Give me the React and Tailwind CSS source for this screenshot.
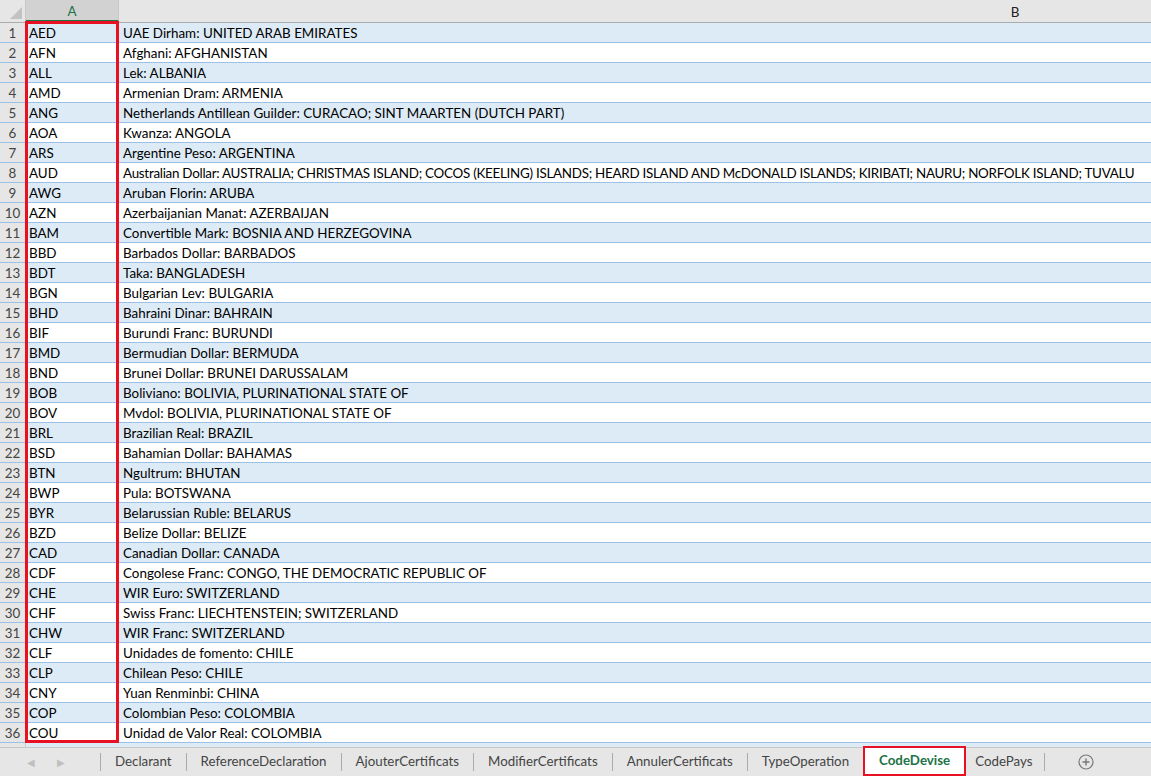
import React from 'react';

const rows = [
  ['AED', 'UAE Dirham: UNITED ARAB EMIRATES'],
  ['AFN', 'Afghani: AFGHANISTAN'],
  ['ALL', 'Lek: ALBANIA'],
  ['AMD', 'Armenian Dram: ARMENIA'],
  ['ANG', 'Netherlands Antillean Guilder: CURACAO; SINT MAARTEN (DUTCH PART)'],
  ['AOA', 'Kwanza: ANGOLA'],
  ['ARS', 'Argentine Peso: ARGENTINA'],
  ['AUD', 'Australian Dollar: AUSTRALIA; CHRISTMAS ISLAND; COCOS (KEELING) ISLANDS; HEARD ISLAND AND McDONALD ISLANDS; KIRIBATI; NAURU; NORFOLK ISLAND; TUVALU'],
  ['AWG', 'Aruban Florin: ARUBA'],
  ['AZN', 'Azerbaijanian Manat: AZERBAIJAN'],
  ['BAM', 'Convertible Mark: BOSNIA AND HERZEGOVINA'],
  ['BBD', 'Barbados Dollar: BARBADOS'],
  ['BDT', 'Taka: BANGLADESH'],
  ['BGN', 'Bulgarian Lev: BULGARIA'],
  ['BHD', 'Bahraini Dinar: BAHRAIN'],
  ['BIF', 'Burundi Franc: BURUNDI'],
  ['BMD', 'Bermudian Dollar: BERMUDA'],
  ['BND', 'Brunei Dollar: BRUNEI DARUSSALAM'],
  ['BOB', 'Boliviano: BOLIVIA, PLURINATIONAL STATE OF'],
  ['BOV', 'Mvdol: BOLIVIA, PLURINATIONAL STATE OF'],
  ['BRL', 'Brazilian Real: BRAZIL'],
  ['BSD', 'Bahamian Dollar: BAHAMAS'],
  ['BTN', 'Ngultrum: BHUTAN'],
  ['BWP', 'Pula: BOTSWANA'],
  ['BYR', 'Belarussian Ruble: BELARUS'],
  ['BZD', 'Belize Dollar: BELIZE'],
  ['CAD', 'Canadian Dollar: CANADA'],
  ['CDF', 'Congolese Franc: CONGO, THE DEMOCRATIC REPUBLIC OF'],
  ['CHE', 'WIR Euro: SWITZERLAND'],
  ['CHF', 'Swiss Franc: LIECHTENSTEIN; SWITZERLAND'],
  ['CHW', 'WIR Franc: SWITZERLAND'],
  ['CLF', 'Unidades de fomento: CHILE'],
  ['CLP', 'Chilean Peso: CHILE'],
  ['CNY', 'Yuan Renminbi: CHINA'],
  ['COP', 'Colombian Peso: COLOMBIA'],
  ['COU', 'Unidad de Valor Real: COLOMBIA'],
];

const tabs = [
  'Declarant',
  'ReferenceDeclaration',
  'AjouterCertificats',
  'ModifierCertificats',
  'AnnulerCertificats',
  'TypeOperation',
  'CodeDevise',
  'CodePays',
];

export default function App() {
  return (
    <div
      className="w-[1151px] h-[776px] overflow-hidden flex flex-col bg-white text-[13.4px] text-black"
      style={{ fontFamily: 'Lato, "Open Sans", sans-serif' }}
    >
      {/* grid */}
      <div className="relative flex-1 overflow-hidden">
        {/* column headers */}
        <div className="flex h-[23px] bg-[#e6e6e6] border-b border-[#ababab]">
          <div className="w-[26px] shrink-0 border-r border-[#c8c8c8] relative">
            <svg className="absolute right-[3px] bottom-[3px]" width="12" height="12" viewBox="0 0 12 12">
              <path d="M12 0 L12 12 L0 12 Z" fill="#c2c2c2" />
            </svg>
          </div>
          <div className="w-[93px] shrink-0 flex items-center justify-center pt-[2px] bg-[#d2d2d2] text-[#217346] border-r border-[#c8c8c8] border-b-2 border-b-[#217346]">
            A
          </div>
          <div className="w-[1792px] shrink-0 flex items-center justify-center pt-[2px] text-[#222]">B</div>
        </div>

        {rows.map(([code, label], i) => (
          <div
            key={code}
            className={
              'flex h-[20px] border-b border-[#9bc2e6] ' + (i % 2 === 0 ? 'bg-[#ddebf7]' : 'bg-white')
            }
          >
            <div className="w-[26px] shrink-0 bg-[#e6e6e6] border-r border-[#c8c8c8] text-[#444] flex items-center justify-center pt-[3px] leading-none">
              {i + 1}
            </div>
            <div className="w-[93px] shrink-0 border-r border-[#9bc2e6] pl-[3px] pt-[3px] flex items-center leading-none whitespace-nowrap">
              {code}
            </div>
            <div
              className={
                'flex-1 pl-[4px] pt-[3px] flex items-center leading-none whitespace-nowrap ' +
                (label.length > 100 ? 'tracking-[-0.27px]' : '')
              }
            >
              {label}
            </div>
          </div>
        ))}
        <div className="flex h-[10px] bg-[#ddebf7]">
          <div className="w-[26px] shrink-0 bg-[#e6e6e6] border-r border-[#c8c8c8]" />
        </div>

        {/* selection outline */}
        <div className="absolute left-[25px] top-[21px] w-[94px] h-[722px] border-[3px] border-[#e81123] pointer-events-none" />
      </div>

      {/* sheet tabs */}
      <div className="h-[29px] shrink-0 flex items-stretch bg-[#e6e6e6] border-t border-[#c6c6c6] text-[13.3px] text-[#444]">
        <div className="w-[100px] flex items-center gap-[22px] pl-[27px] text-[#c0c0c0] text-[10px]">
          <span>◀</span>
          <span>▶</span>
        </div>
        {tabs.map((t, i) => {
          const active = t === 'CodeDevise';
          if (active) {
            return (
              <div key={t} className="relative flex items-stretch border-l border-[#ababab] px-[1px]">
                <div className="bg-white flex items-center px-[14px] font-bold text-[#217346] border-b-2 border-[#217346] -mt-px">
                  {t}
                </div>
                <div className="absolute -left-[1px] -right-[1px] -top-[2px] bottom-[0px] border-2 border-[#e81123]" />
              </div>
            );
          }
          const afterActive = tabs[i - 1] === 'CodeDevise';
          return (
            <div
              key={t}
              className={
                'flex items-center my-[5px] whitespace-nowrap ' +
                (afterActive ? 'pl-[10px] pr-[12px]' : 'px-[14px] border-l border-[#ababab]')
              }
            >
              {t}
            </div>
          );
        })}
        <div className="border-l border-[#ababab] my-[5px]" />
        <div className="flex items-center pl-[33px]">
          <svg width="16" height="16" viewBox="0 0 16 16">
            <circle cx="8" cy="8" r="7" fill="none" stroke="#777" strokeWidth="1.2" />
            <path d="M8 4.5v7M4.5 8h7" stroke="#777" strokeWidth="1.4" />
          </svg>
        </div>
      </div>
    </div>
  );
}
